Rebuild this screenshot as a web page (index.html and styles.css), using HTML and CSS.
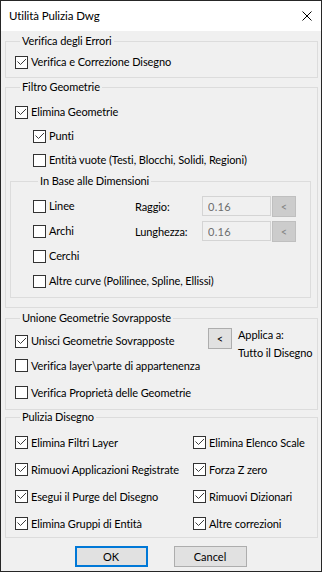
FILE: index.html
```html
<!DOCTYPE html>
<html lang="it">
<head>
  <meta charset="UTF-8">
  <meta name="viewport" content="width=device-width, initial-scale=1.0">
  <title>Utilità Pulizia Dwg</title>
  <link rel="stylesheet" href="styles.css">
</head>
<body>
  <div class="window">
    <!-- Title bar -->
    <div class="titlebar">
      <span class="title">Utilità Pulizia Dwg</span>
      <svg class="close" width="10" height="10" viewBox="0 0 10 10">
        <path d="M0.5 0.5 L9.5 9.5 M9.5 0.5 L0.5 9.5" stroke="#000" stroke-width="1" fill="none"/>
      </svg>
    </div>

    <div class="content">
      <!-- Verifica -->
      <fieldset class="group g-check">
        <legend>Verifica degli Errori</legend>
        <div class="row">
          <label class="check"><span class="box on"><svg viewBox="0 0 11 11"><polyline points="1.5,4.5 4.5,7.5 10,2"/></svg></span>Verifica e Correzione Disegno</label>
        </div>
      </fieldset>

      <!-- Filtro -->
      <fieldset class="group g-filter">
        <legend>Filtro Geometrie</legend>
        <div class="row">
          <label class="check"><span class="box on"><svg viewBox="0 0 11 11"><polyline points="1.5,4.5 4.5,7.5 10,2"/></svg></span>Elimina Geometrie</label>
        </div>
        <div class="row sub">
          <label class="check"><span class="box on"><svg viewBox="0 0 11 11"><polyline points="1.5,4.5 4.5,7.5 10,2"/></svg></span>Punti</label>
        </div>
        <div class="row sub">
          <label class="check"><span class="box"></span>Entità vuote (Testi, Blocchi, Solidi, Regioni)</label>
        </div>

        <fieldset class="group inner">
          <legend>In Base alle Dimensioni</legend>
          <div class="dims">
            <div class="dim-row">
              <label class="check dim-check"><span class="box"></span>Linee</label>
              <span class="dim-label">Raggio:</span>
              <input class="field" type="text" value="0.16" disabled>
              <button class="pick" disabled>&lt;</button>
            </div>
            <div class="dim-row">
              <label class="check dim-check"><span class="box"></span>Archi</label>
              <span class="dim-label">Lunghezza:</span>
              <input class="field" type="text" value="0.16" disabled>
              <button class="pick" disabled>&lt;</button>
            </div>
            <div class="dim-row">
              <label class="check dim-check"><span class="box"></span>Cerchi</label>
            </div>
            <div class="dim-row">
              <label class="check"><span class="box"></span>Altre curve (Polilinee, Spline, Ellissi)</label>
            </div>
          </div>
        </fieldset>
      </fieldset>

      <!-- Unione -->
      <fieldset class="group g-merge">
        <legend>Unione Geometrie Sovrapposte</legend>
        <div class="merge-top">
          <label class="check merge-check"><span class="box on"><svg viewBox="0 0 11 11"><polyline points="1.5,4.5 4.5,7.5 10,2"/></svg></span>Unisci Geometrie Sovrapposte</label>
          <button class="pick active">&lt;</button>
          <div class="apply">
            <div>Applica a:</div>
            <div>Tutto il Disegno</div>
          </div>
        </div>
        <div class="row tall">
          <label class="check"><span class="box"></span>Verifica layer\parte di appartenenza</label>
        </div>
        <div class="row tall">
          <label class="check"><span class="box"></span>Verifica Proprietà delle Geometrie</label>
        </div>
      </fieldset>

      <!-- Pulizia -->
      <fieldset class="group g-clean">
        <legend>Pulizia Disegno</legend>
        <div class="clean-grid">
          <label class="check"><span class="box on"><svg viewBox="0 0 11 11"><polyline points="1.5,4.5 4.5,7.5 10,2"/></svg></span>Elimina Filtri Layer</label>
          <label class="check"><span class="box on"><svg viewBox="0 0 11 11"><polyline points="1.5,4.5 4.5,7.5 10,2"/></svg></span>Elimina Elenco Scale</label>
          <label class="check"><span class="box on"><svg viewBox="0 0 11 11"><polyline points="1.5,4.5 4.5,7.5 10,2"/></svg></span>Rimuovi Applicazioni Registrate</label>
          <label class="check"><span class="box on"><svg viewBox="0 0 11 11"><polyline points="1.5,4.5 4.5,7.5 10,2"/></svg></span>Forza Z zero</label>
          <label class="check"><span class="box on"><svg viewBox="0 0 11 11"><polyline points="1.5,4.5 4.5,7.5 10,2"/></svg></span>Esegui il Purge del Disegno</label>
          <label class="check"><span class="box on"><svg viewBox="0 0 11 11"><polyline points="1.5,4.5 4.5,7.5 10,2"/></svg></span>Rimuovi Dizionari</label>
          <label class="check"><span class="box on"><svg viewBox="0 0 11 11"><polyline points="1.5,4.5 4.5,7.5 10,2"/></svg></span>Elimina Gruppi di Entità</label>
          <label class="check"><span class="box on"><svg viewBox="0 0 11 11"><polyline points="1.5,4.5 4.5,7.5 10,2"/></svg></span>Altre correzioni</label>
        </div>
      </fieldset>

      <div class="buttons">
        <button class="btn default">OK</button>
        <button class="btn">Cancel</button>
      </div>
    </div>
  </div>
</body>
</html>
```

FILE: styles.css
```css
/* Dialog */
* {
  box-sizing: border-box;
}

body {
  margin: 0;
  font-family: Lato, "Noto Sans", sans-serif;
  font-size: 11px;
  letter-spacing: -0.1px;
  color: #000;
  background: #fff;
}

.window {
  width: 322px;
  height: 572px;
  border: 1px solid #262626;
  background: #f0f0f0;
  display: flex;
  flex-direction: column;
}

.titlebar {
  height: 30px;
  flex-shrink: 0;
  background: #fff;
  display: flex;
  align-items: center;
  justify-content: space-between;
  padding: 0 9px 0 8px;
}

.title {
  font-size: 11.5px;
  line-height: 14px;
}

.content {
  padding: 3px 3px 0 4px;
}

/* Groups */
.group {
  margin: 0;
  padding: 0;
  border: 1px solid #dcdcdc;
  min-width: 0;
}

.group legend {
  margin-left: 5px;
  padding: 0 2px;
  line-height: 14px;
}

.g-check {
  padding: 4px 0 5px 9px;
}

.g-filter {
  margin-top: 2px;
  padding: 6px 0 9px 9px;
}

.g-merge {
  margin-top: 3px;
  padding: 0 0 3px 9px;
}

.g-clean {
  padding: 5px 0 0 9px;
}

.inner {
  margin: 2px 6px 0 -5px;
  padding: 6px 0 4px 22px;
}

/* Rows and checkboxes */
.row {
  height: 20px;
  display: flex;
  align-items: center;
}

.g-filter > .row {
  height: 24px;
}

.row.sub {
  padding-left: 18px;
}

.row.tall {
  height: 27px;
}

.check {
  display: flex;
  align-items: center;
  gap: 3px;
  line-height: 14px;
  white-space: nowrap;
}

.box {
  width: 13px;
  height: 13px;
  flex-shrink: 0;
  border: 1px solid #333;
  background: #fff;
}

.box svg {
  display: block;
  width: 11px;
  height: 11px;
  fill: none;
  stroke: #3c3c3c;
  stroke-width: 1;
}

/* Dimension rows */
.dims {
  display: flex;
  flex-direction: column;
  gap: 1px;
}

.dim-row {
  height: 24px;
  display: flex;
  align-items: center;
}

.dim-check {
  width: 102px;
}

.dim-label {
  width: 67px;
}

.field {
  width: 69px;
  height: 20px;
  margin: 0 1px 0 0;
  padding: 0 0 0 5px;
  border: 1px solid #d4d4d4;
  background: #f0f0f0;
  color: #6d6d6d;
  font-family: inherit;
  font-size: 11px;
  letter-spacing: 0.3px;
}

.pick {
  width: 24px;
  height: 21px;
  padding: 0;
  border: 1px solid #bfbfbf;
  background: #cccccc;
  color: #838383;
  font-family: inherit;
  font-size: 11px;
}

.pick.active {
  border-color: #adadad;
  background: #e1e1e1;
  color: #000;
}

/* Merge block */
.merge-top {
  height: 27px;
  display: flex;
  align-items: flex-start;
}

.merge-check {
  width: 193px;
  height: 20px;
  margin-top: 6px;
}

.merge-top .pick {
  margin-top: 3px;
}

.apply {
  margin: 1px 0 0 6px;
  line-height: 18px;
  white-space: nowrap;
}

/* Cleanup grid */
.clean-grid {
  display: grid;
  grid-template-columns: 178px 1fr;
  grid-auto-rows: 27px;
  align-items: center;
}

/* Bottom buttons */
.buttons {
  margin-top: 8px;
  display: flex;
  justify-content: center;
  gap: 26px;
  padding-right: 2px;
}

.btn {
  width: 73px;
  height: 21px;
  padding: 0;
  border: 1px solid #adadad;
  background: #e1e1e1;
  color: #000;
  font-family: inherit;
  font-size: 11px;
}

.btn.default {
  border: 2px solid #0078d7;
}
```
